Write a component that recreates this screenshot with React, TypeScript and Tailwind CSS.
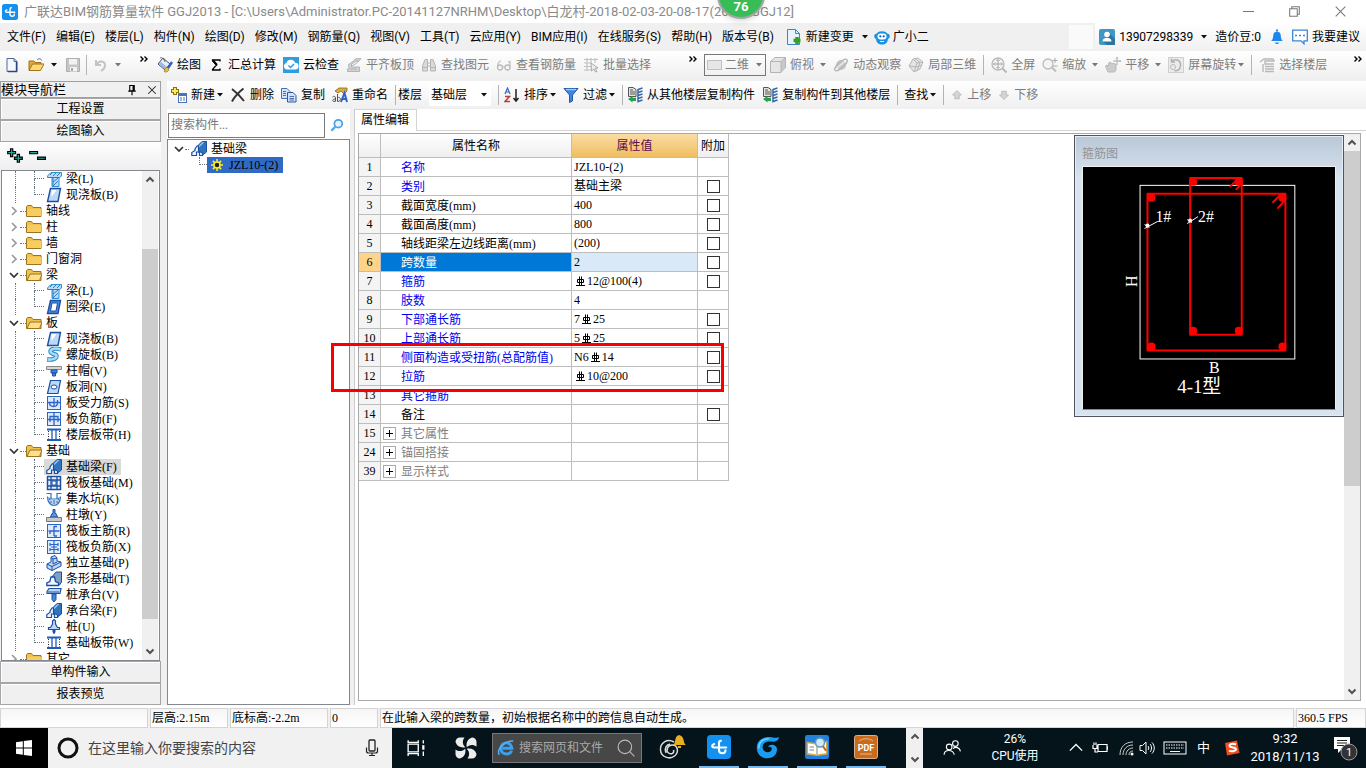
import React from 'react';

const UI = "font-[Roboto,'Noto_Sans_CJK_SC',sans-serif]";
const SONG = "font-['Liberation_Serif','Noto_Sans_CJK_SC',serif]";

function Icon({ children, size = 16, className = '' }: { children: React.ReactNode; size?: number; className?: string }) {
  return (
    <svg width={size} height={size} viewBox="0 0 16 16" fill="none" className={`shrink-0 ${className}`} aria-hidden="true">
      {children}
    </svg>
  );
}

const Caret = ({ color = '#111' }: { color?: string }) => (
  <svg width="6" height="4" viewBox="0 0 6 4" className="shrink-0" aria-hidden="true"><path d="M0 0h6L3 3.4z" fill={color} /></svg>
);

const Chevrons = () => (
  <svg width="8" height="6" viewBox="0 0 8 6" className="shrink-0" aria-hidden="true"><path d="M.5.5 3 3 .5 5.5M4.500.5 7 3 4.500 5.500" stroke="#000" strokeWidth="1.4" fill="none" /></svg>
);

const Arrow = ({ dir }: { dir: 'up' | 'down' }) => (
  <svg width="10" height="7" viewBox="0 0 10 7" className="shrink-0" aria-hidden="true">
    <path d={dir === 'up' ? 'M1.500 5.500 5 2l3.500 3.500' : 'M1.500 1.500 5 5l3.500-3.500'} stroke="#505050" strokeWidth="2" fill="none" />
  </svg>
);

const Sep = () => <span className="h-5 w-px shrink-0 bg-[#b4b4b4]" />;

/* ---------- logos and toolbar icons ---------- */

const AppLogo = ({ size = 16 }: { size?: number }) => (
  <Icon size={size}>
    <rect width="16" height="16" rx="2.500" fill="#1490f0" />
    <path d="M9.300 3.800C8.200 3.800 8 4.500 8 5.300v4.900c0 1.400.9 2 2.300 2s2-.8 2-2M4.800 6C3 6.500 3 8.300 4.800 8.300h8" stroke="#fff" strokeWidth="1.400" strokeLinecap="round" />
  </Icon>
);

const NewFile = () => <Icon><path d="M3 1.500h7l3 3v10H3z" fill="#f4f8ff" stroke="#52699a" /><path d="M10 1.500v3h3" stroke="#52699a" /><path d="M12.500 5v9.500H4" stroke="#2d4478" strokeWidth="1.400" /></Icon>;
const OpenFile = () => <Icon><path d="M1 13V4h5l1 1.500h6V8" fill="#e7a733" stroke="#a2731d" /><path d="M1 13.500 4.500 7H16l-3.500 6.500z" fill="#ffd873" stroke="#a2731d" /><path d="M9 3c2-2 4-1.500 4.500.5" stroke="#3c6eb8" /></Icon>;
const SaveIcon = () => <Icon><path d="M1.500 1.500h13v13h-13z" fill="#c6c6c6" stroke="#b0b0b0" /><path d="M4 2h8v5.500H4zM5 10h7v4.500H5z" fill="#f2f2f2" /><path d="M6 11h2v3H6z" fill="#aaa" /></Icon>;
const Undo = () => <Icon><path d="M3 3v5h5M3.500 7.500C6 3 12 3.500 12 8.500c0 2-1.500 4-4 5.500" stroke="#c4c4c4" strokeWidth="2" /></Icon>;
const Paint = () => <Icon><path d="m6 1 7 6-5 6-7-6z" fill="#e8eef8" stroke="#38507c" /><path d="M1.500 7 8 12.500 10 10 4 5z" fill="#9db7dd" /><path d="M3 1c2-1 4 1 5 4" stroke="#666" /><path d="M10 10c-2 2-3 2-2.500 5C10 15.500 12 14 12 12z" fill="#e5bf3a" stroke="#8c6a15" strokeWidth=".6" /><path d="m11 11 4-6" stroke="#2b63c4" strokeWidth="2.400" /></Icon>;
const Sigma = () => <Icon><path d="M12 4.500V3H4.500v.5L8.500 8l-4 4.500v.5H12v-1.500" stroke="#000" strokeWidth="1.300" /><path d="m5 3.500 4 4.500" stroke="#000" strokeWidth="2" /></Icon>;
const CloudCheck = () => <Icon><rect width="16" height="16" fill="#2d9de0" /><path d="M4 12.500a3.300 3.300 0 0 1-.5-6.500A4.500 4.500 0 0 1 12 5.700a3.400 3.400 0 0 1 .3 6.800z" fill="#fff" /><path d="m5.500 8.500 2 2L11 7" stroke="#2d9de0" strokeWidth="1.500" /></Icon>;
const AlignTop = () => <Icon><path d="M1.500 14.500h12V10h-8V7l6-3.500v2L15 1.500 9 2v1L2.500 7.500 3 12H1.500z" fill="#d2d2d2" stroke="#b4b4b4" /><path d="M4 12h7M6 9l5-3" stroke="#b4b4b4" /></Icon>;
const Binoculars = () => <Icon><path d="M1.500 14V9L4 2.500h2.500V14zM14.500 14V9L12 2.500H9.500V14z" fill="#dadada" stroke="#b4b4b4" /><path d="M6.500 6h3v3h-3zM1.500 10.500h5M9.500 10.500h5" stroke="#b4b4b4" /></Icon>;
const Glasses = () => <Icon><circle cx="4" cy="10.500" r="2.500" stroke="#bbb" strokeWidth="1.300" /><circle cx="11.500" cy="10.500" r="2.500" stroke="#bbb" strokeWidth="1.300" /><path d="M1.500 9C2 6 3.500 4 5 4M14 10V4.500l-2 .5M6.500 10h2.500" stroke="#bbb" strokeWidth="1.200" /></Icon>;
const Batch = () => <Icon><path d="M1 2.500h14M1 6h7M1 9.500h7M1 13h7M4 1v13M8 1v5M12 1v5" stroke="#c2c2c2" strokeWidth="1.200" /><path d="m8 6 7 5-3 .3 2 3.200-1.500.5-1.700-3L8.500 14z" fill="#eee" stroke="#aaa" /></Icon>;
const Flat2d = () => <Icon><rect x=".5" y="3.500" width="14" height="9" fill="#e6e6e6" stroke="#c0c0c0" /></Icon>;
const Cube = () => <Icon><path d="M.5 4.500 5 .5h10.500v10l-4.500 5H.5z" fill="#e6e6e6" stroke="#b4b4b4" /><path d="M11 5v10l4-4.500V1z" fill="#c8c8c8" /><path d="M.5 4.500H11V15M11 4.500l4.500-4" stroke="#b4b4b4" /></Icon>;
const Orbit = () => <Icon><circle cx="8" cy="8" r="5" fill="#c8c8c8" /><ellipse cx="8" cy="8" rx="8" ry="2.800" transform="rotate(-42 8 8)" stroke="#b4b4b4" strokeWidth="1.300" /><path d="m4 11 8-7" stroke="#e8e8e8" strokeWidth="1.300" /></Icon>;
const Part3d = () => <Icon><path d="m1 9 4-7 5-1 5 4-3 7-6 3z" fill="#e4e4e4" stroke="#b8b8b8" /><path d="m5 2 4 4-3 9M9 6l6-1M1 9l7 1 6-2M7 1.500l5 4L9 14" stroke="#b8b8b8" /></Icon>;
const FullView = () => <Icon><circle cx="7" cy="7" r="6" fill="#f4f4f4" stroke="#b8b8b8" strokeWidth="1.300" /><path d="M7 2.500v9M2.500 7h9M5.500 4 7 2.500 8.500 4M5.500 10 7 11.500 8.500 10M4 5.500 2.500 7 4 8.500M10 5.500 11.500 7 10 8.500" stroke="#a8a8a8" /><path d="m11.500 11.500 4 4" stroke="#b8b8b8" strokeWidth="2" /></Icon>;
const ZoomIc = () => <Icon><circle cx="6" cy="7" r="5" fill="#f4f4f4" stroke="#bcbcbc" strokeWidth="1.300" /><path d="m10 10.500 4 4" stroke="#bcbcbc" strokeWidth="2" /><path d="M13 1v5M10.500 3.500h5M10.500 9h5" stroke="#aaa" /></Icon>;
const Pan = () => <Icon><path d="M3 15 .5 9 2 8l1.500 1.500V6l2-1 1 2 2-1 1 1 1.500 0L11 13l-1.500 2z" fill="#ccc" stroke="#b8b8b8" /><path d="M12 0v8M8 4h8M11 1.500 12 .5l1 1M14.500 3l1 1-1 1" stroke="#aaa" /></Icon>;
const Rotate = () => <Icon><rect x=".5" y=".5" width="15" height="15" fill="#ebebeb" stroke="#cfcfcf" /><path d="M4 4C8 1 13 3.500 12.500 8.500S9 14 6.500 13.500M3.500 1.500V5H7" stroke="#b0b0b0" strokeWidth="1.500" /><circle cx="5" cy="10" r="2.500" stroke="#bbb" /></Icon>;
const Floors = () => <Icon><path d="m1 5 4-3h9l1 2H6v3h9M4 7v8M6 9.500h9M6 12h9M6 14.500h9" stroke="#b8b8b8" strokeWidth="1.400" /></Icon>;

const NewItem = () => <Icon><path d="M4 0v8M0 4h8" stroke="#8a7410" strokeWidth="4" /><path d="M4 1v6M1 4h6" stroke="#ffe65c" strokeWidth="2" /><rect x="7.500" y="6.500" width="8" height="9" fill="#fff" stroke="#4c72b8" /><path d="M8 8h7.500" stroke="#4c72b8" strokeWidth="2" /><path d="M9 11h2M12 11h2M9 13h2M12 13h2" stroke="#4c72b8" /></Icon>;
const DeleteX = () => <Icon><path d="M2 2c4 3 8 7 12 12M13.500 1.500C9 5 5 9 2 14.500" stroke="#333" strokeWidth="2" /></Icon>;
const Copy = () => <Icon><path d="M.5 1.500H6l3 3v7H.5z" fill="#d5e3f8" stroke="#4a6fb5" /><path d="M6.500 5.500H12l3 3v6.500H6.500z" fill="#d5e3f8" stroke="#2f559e" /><path d="M2 4.500h3M2 6.500h3M2 8.500h3M8.500 9.500H13M8.500 11.500H13M8.500 13H13" stroke="#4a6fb5" /></Icon>;
const Rename = () => <Icon><path d="M3 4 7 1h8v3l-3 3-3-3-3 2z" fill="#dcae38" stroke="#85671b" strokeWidth=".8" /><path d="M.5 10c1-1 3-1 3 1v3.500M3.500 12c-3-.5-3.500 2.500-1.500 2.500S3.500 13 3.500 12M5.500 7v7.500c4 0 4-5 0-4" stroke="#555" /><path d="m9 15 3.500-9 2.500 9M10 12h4" stroke="#2f65c7" strokeWidth="2" /></Icon>;
const SortAZ = () => <Icon><path d="M1 7 3.500 1 6 7M2 5h3" stroke="#3468b8" strokeWidth="1.200" /><path d="M1 9.500h4.500L1 14.500h5" stroke="#b3413b" strokeWidth="1.500" /><path d="M12 2v12M9.500 11l2.500 3 2.500-3" stroke="#222" strokeWidth="1.500" /></Icon>;
const Filter = () => <Icon><path d="M1 1.500h14L9.500 8v6l-3 1.500V8z" fill="#3f86e2" stroke="#2159a8" /><path d="M3 2.500h10" stroke="#a7cdfa" strokeWidth="1.300" /></Icon>;
const CopyFrom = () => <Icon><path d="M1.500.5H6l3 2v7H1.500z" fill="#e4e4e4" stroke="#555" /><path d="M3 3h3M3 5h5M3 7h5" stroke="#555" /><path d="M8 15.500V14H4.500v1.500L0 12l4.500-3v1.800H8z" fill="#27a04c" transform="translate(1 0)" /><path d="M11 2v13.500M11 2.500l4.500-1.500M11 5.500 15.500 4M11 8.500 15.500 7M11 11.500l4.500-1.500M11 14.500l4.500-1.500" stroke="#3566a8" strokeWidth="1.500" /></Icon>;
const MoveArrow = ({ down }: { down?: boolean }) => <Icon size={12} className={down ? 'rotate-180' : ''}><path d="m8 2 6 6h-3v5H5V8H2z" fill="#d5d5d5" stroke="#b0b0b0" /></Icon>;
const FileAdd = () => <Icon><path d="M1.500.5h8l4 4v11h-12z" fill="#e6f3fd" stroke="#3d86c0" /><path d="M9.500.5v4h4" stroke="#3d86c0" /><path d="M11 8v7M7.500 11.500h7" stroke="#31a321" strokeWidth="3.500" /></Icon>;
const Robot = () => <Icon><path d="M3 4.500C4 1.500 12 1.500 13 4.500c3 0 4 4 1 5.500-.5 4-2.500 5.500-6 5.500S2.500 14 2 10c-3-1.500-2-5.500 1-5.500z" fill="#1692e8" /><rect x="3.500" y="4.500" width="9" height="6" rx="3" fill="#fff" /><circle cx="6.300" cy="7.300" r="1.100" fill="#0e5ea6" /><circle cx="9.700" cy="7.300" r="1.100" fill="#0e5ea6" /><path d="M6 12.500h4" stroke="#fff" /></Icon>;
const UserBadge = () => <Icon><rect width="16" height="16" rx="2" fill="#3f97c6" /><path d="m11 5 5 5v6H8l-5-4z" fill="#2b75a0" /><circle cx="8" cy="5.500" r="2.800" fill="#fff" /><path d="M3.500 12.500c0-5 9-5 9 0z" fill="#fff" /></Icon>;
const Bell = () => <Icon><path d="M2 12c2-1 2-4 2.500-7 .6-3 6.400-3 7 0 .5 3 .5 6 2.500 7z" fill="#1d87ee" /><path d="M6 13.500a2 1.600 0 0 0 4 0zM7 .5h2v2H7z" fill="#1d87ee" /></Icon>;
const Bubble = () => <Icon><path d="M.7 1.200h14.600v10.600H12v3l-3-3H.7z" fill="#fff" stroke="#3a85d8" strokeWidth="1.300" /><path d="M3 6.500h2M7 6.500h2M11 6.500h2" stroke="#3a85d8" strokeWidth="1.500" /></Icon>;

/* ---------- component tree ---------- */

const Folder = ({ open }: { open?: boolean }) => (
  <Icon>
    <path d="M.5 13.500v-10l1-1h4l1.500 2h8v9z" fill="#f0c24f" stroke="#9c7320" />
    {open ? <path d="M1 13.500 4 7h12l-2.500 6.500z" fill="#ffe08a" stroke="#9c7320" /> : <path d="M1 6h14v7H1z" fill="#f6cd61" />}
  </Icon>
);

const B = '#1a4fa3';
const L = '#bcd8f6';

const glyphs: Record<string, React.ReactNode> = {
  beam: <><path d="M1.500 5 5 1.500h10.500V5L13 7v8.500H6V6.500H1.500z" fill={L} stroke="#3090d0" /><path d="M2 6.500 13 6.500M7 6.500v9M4 4l2-2M7 5l3-3M11 5l3-3M7 11l5-4M7 15l5-5" stroke="#2b7fc4" /></>,
  slab: <><path d="M4.500 1.500h10L12 14.500H1.500z" fill={L} stroke={B} strokeWidth="1.400" /><path d="M5.500 3h5l-5 7z" fill="#fff" /></>,
  ring: <><path d="M4.500 1.500h10L12 14.500H1.500z" fill="#5089d8" stroke={B} strokeWidth="1.400" /><path d="M6 4h5.500L10 12H4.500z" fill="#fff" stroke={B} /></>,
  spiral: <><path d="M15 2.500C8 0 3 3 5 5.500s5.500 1 5.500 3.500S7 13 1 12.500" stroke="#2789c9" strokeWidth="4.500" /><path d="M14.500 2.500C8 0 3 3 5 5.500s5.500 1 5.500 3.500S7 13 1.500 12.500" stroke="#a9dcf5" strokeWidth="2.600" /></>,
  cap: <><path d="M.5 3.500h15v3H.5z" fill="#d5d5d5" stroke="#888" /><path d="M5 7h6v3H5zM6.500 10h3v3h-3z" fill="#4a86d6" stroke={B} /></>,
  hole: <><path d="M4.500 1.500h10L12 14.500H1.500z" fill={L} stroke={B} strokeWidth="1.200" /><ellipse cx="8" cy="8" rx="3" ry="2" fill="#fff" stroke={B} /></>,
  forceBar: <><rect x="1.500" y="1.500" width="13" height="13" fill="#dfeafd" stroke="#2b64c9" /><path d="M2 7.500h12M8 3v9M3.500 7.500c0 3 1.500 4 4 4s4-1.500 4-4V5" stroke="#2b64c9" strokeWidth="1.300" /></>,
  negBar: <><rect x="1.500" y="1.500" width="13" height="13" fill="#dfeafd" stroke="#2b64c9" /><path d="M8 2v12M4 11V5.500h8V11M2 8.500h12" stroke="#2b64c9" strokeWidth="1.300" /></>,
  strip: <><path d="M1 2.500h14M1 13h14" stroke="#1f5bbd" strokeWidth="1.800" /><path d="M6 3v9M10 3v9" stroke="#1f5bbd" strokeWidth="1.300" /><path d="M2.500 4v8M13.500 4v8" stroke="#222" strokeDasharray="1 1.500" /></>,
  footBeam: <><path d="M6.500 10V5L11 .5h4.500V11L11 14.500z" fill="#2f74bd" stroke={B} /><path d="m7.500 6 5-5" stroke="#9cc6ee" strokeWidth="1.500" /><path d="M.8 14.500v-3L4 9.500V8l2-3h1.500v5l4 2v2.500H8.500V11h-3v3.500z" fill="#eef6ff" stroke={B} strokeWidth="1.200" /></>,
  raft: <><rect x="1.500" y="1.500" width="13" height="13" fill="#e8f1fd" stroke={B} strokeWidth="1.500" /><path d="M2 5h12M2 11h12M5 2v12M11 2v12" stroke={B} strokeWidth="1.300" /><rect x="6" y="6" width="4" height="4" fill="#fff" stroke={B} /></>,
  pit: <><path d="M2 6h3v3h6V6h3c0 11-12 11-12 0z" fill={L} /><path d="M.5 2.500H5V8h6V2.500h4.500M1.500 5.500c0 12 13 12 13 0" stroke="#2f74bd" strokeWidth="1.200" /><path d="M3.500 8h.1M5 11h.1M8 12h.1M11 11h.1M12.500 8h.1M8 10h.1" stroke={B} strokeLinecap="round" strokeWidth="1.400" /></>,
  pier: <><path d="M4.500 10 6 6.500h1V2.500h2v4h1l1.500 3.500z" fill="#5d97dd" stroke={B} /><path d="M.5 10.500h15v4H.5z" fill="#c9c9c9" stroke="#777" /></>,
  mainBar: <><rect x="1.500" y="1.500" width="13" height="13" fill="#dfeafd" stroke="#2b64c9" /><path d="M2.500 8h11M8 3v10M8 3.500h3M4 11V8M11 13H8" stroke="#2b64c9" strokeWidth="1.300" /></>,
  topBar: <><rect x="1.500" y="1.500" width="13" height="13" fill="#dfeafd" stroke="#2b64c9" /><path d="M8 2v12M4 5.500h8M4 10.500h8M4 4v3M12 4v3M4 9v3M12 9v3M5 8h6" stroke="#2b64c9" strokeWidth="1.200" /></>,
  pad: <><path d="m1 9 4-2V2l4-1.500L11 3v3l4 1v4l-9 4.500L1 13z" fill={L} stroke={B} /><path d="M5 2.500 7 4v5l4-2M1 9l5 2.500L15 7M6 11.500v4M7 4l4-1" stroke={B} /></>,
  stripFoot: <><path d="m5 7 5-6h5.500v10l-2 3z" fill="#7d9fc4" stroke={B} /><path d="M.8 14.500V12l3-1.500L5 6h3.500l1 4.500 3 1.500v2.500z" fill="#eef5fd" stroke={B} strokeWidth="1.300" /></>,
  pileCap: <><path d="M1 4.500 3 1.500h12l-1 5H1z" fill={L} stroke={B} strokeWidth="1.200" /><path d="M2 5h11M6 7v5.500l2 2.500 2-2.500V7z" fill="#4a86d6" stroke={B} /></>,
  pile: <><path d="M6.500 2 8 .5 9.500 2v3l2 3.500h2v2h-11v-2h2l2-3.500z" fill={L} stroke={B} strokeWidth="1.200" /><path d="M6.500 11h3v2L8 15.500 6.500 13z" fill={B} /></>,
};

type Node = { label: string; icon?: string; open?: boolean; last?: boolean; selected?: boolean };

const tree: Node[] = [
  { label: '梁(L)', icon: 'beam' },
  { label: '现浇板(B)', icon: 'slab', last: true },
  { label: '轴线' },
  { label: '柱' },
  { label: '墙' },
  { label: '门窗洞' },
  { label: '梁', open: true },
  { label: '梁(L)', icon: 'beam' },
  { label: '圈梁(E)', icon: 'ring', last: true },
  { label: '板', open: true },
  { label: '现浇板(B)', icon: 'slab' },
  { label: '螺旋板(B)', icon: 'spiral' },
  { label: '柱帽(V)', icon: 'cap' },
  { label: '板洞(N)', icon: 'hole' },
  { label: '板受力筋(S)', icon: 'forceBar' },
  { label: '板负筋(F)', icon: 'negBar' },
  { label: '楼层板带(H)', icon: 'strip', last: true },
  { label: '基础', open: true },
  { label: '基础梁(F)', icon: 'footBeam', selected: true },
  { label: '筏板基础(M)', icon: 'raft' },
  { label: '集水坑(K)', icon: 'pit' },
  { label: '柱墩(Y)', icon: 'pier' },
  { label: '筏板主筋(R)', icon: 'mainBar' },
  { label: '筏板负筋(X)', icon: 'topBar' },
  { label: '独立基础(P)', icon: 'pad' },
  { label: '条形基础(T)', icon: 'stripFoot' },
  { label: '桩承台(V)', icon: 'pileCap' },
  { label: '承台梁(F)', icon: 'footBeam' },
  { label: '桩(U)', icon: 'pile' },
  { label: '基础板带(W)', icon: 'strip', last: true },
  { label: '其它' },
];

function TreeRow({ node }: { node: Node }) {
  if (!node.icon) {
    return (
      <li className="flex h-4 items-center pl-[6px]">
        <svg width="12" height="12" viewBox="0 0 12 12" aria-hidden="true">
          <path d={node.open ? 'M2 4l4 4 4-4' : 'M4 2l4 4-4 4'} stroke={node.open ? '#333' : '#999'} strokeWidth="1.700" fill="none" />
        </svg>
        <span className="w-[6px] border-b border-dotted border-gray-500" />
        <Folder open={node.open} />
        <span className="pl-1">{node.label}</span>
      </li>
    );
  }
  return (
    <li className="flex h-4 items-center pl-[13px]">
      <span className="h-full w-[19px] shrink-0 border-l border-dotted border-gray-500" />
      <span className="flex h-full w-[10px] shrink-0 flex-col">
        <span className="h-2 border-b border-l border-dotted border-gray-500" />
        <span className={node.last ? 'h-2' : 'h-2 border-l border-dotted border-gray-500'} />
      </span>
      <span className={`flex h-4 items-center gap-1 px-[2px] ${node.selected ? 'bg-[#d9d9d9] pr-1' : ''}`}>
        <Icon>{glyphs[node.icon]}</Icon>
        <span>{node.label}</span>
      </span>
    </li>
  );
}

function LeftPanel() {
  const tab = 'h-[22px] shrink-0 border border-[#a5a5a5] bg-[#f0f0f0] text-center leading-5 shadow-[inset_1px_1px_0_#fff]';
  return (
    <aside className={`flex w-[161px] shrink-0 flex-col text-xs ${SONG}`}>
      <div className="flex h-[17px] items-center border border-[#a0a0a0]">
        <h2 className="flex-1 text-[13px] leading-4">模块导航栏</h2>
        <button aria-label="固定" className="mr-2"><Icon size={12}><path d="M5 2h6v7H5zM9.500 2v7M3 9.500h10M8 10v5" stroke="#000" strokeWidth="1.500" /></Icon></button>
        <button aria-label="关闭" className="mr-[2px]"><Icon size={12}><path d="m3 3 10 10M13 3 3 13" stroke="#222" strokeWidth="1.400" /></Icon></button>
      </div>
      <button className={tab}>工程设置</button>
      <button className={tab}>绘图输入</button>
      <div className="flex h-7 shrink-0 items-center gap-1 bg-linear-to-b from-white to-[#eee] px-[6px]">
        <button aria-label="全部展开"><Icon size={18}><path d="M5 1v8M1 5h8M11 6v8M7 10h8" stroke="#000" strokeWidth="3" /><path d="M5 2v6M2 5h6M11 7v6M8 10h6" stroke="#2aa79b" /></Icon></button>
        <button aria-label="全部折叠"><Icon size={18}><path d="M1 5h8M8 10h8" stroke="#000" strokeWidth="3" /><path d="M2 5h6M9 10h6" stroke="#2aa79b" /></Icon></button>
      </div>
      <div className="mx-px flex min-h-0 flex-1 border border-[#828790] bg-white">
        <ul className="min-w-0 flex-1 overflow-hidden whitespace-nowrap leading-4">
          {tree.map((n, i) => <TreeRow key={i} node={n} />)}
        </ul>
        <div className="mr-px flex w-4 shrink-0 flex-col items-center bg-[#f0f0f0]">
          <span className="flex h-[17px] items-center"><Arrow dir="up" /></span>
          <span className="h-[61px]" />
          <span className="w-full flex-1 bg-[#cdcdcd]" />
          <span className="h-6" />
          <span className="flex h-[17px] items-center"><Arrow dir="down" /></span>
        </div>
      </div>
      <button className={tab}>单构件输入</button>
      <button className={tab}>报表预览</button>
    </aside>
  );
}

/* ---------- property table ---------- */

type Prop = { no: number; name: string; value?: string; check?: boolean; tone?: 'black' | 'gray'; group?: boolean };

const props: Prop[] = [
  { no: 1, name: '名称', value: 'JZL10-(2)' },
  { no: 2, name: '类别', value: '基础主梁', check: true },
  { no: 3, name: '截面宽度(mm)', value: '400', check: true, tone: 'black' },
  { no: 4, name: '截面高度(mm)', value: '800', check: true, tone: 'black' },
  { no: 5, name: '轴线距梁左边线距离(mm)', value: '(200)', check: true, tone: 'black' },
  { no: 6, name: '跨数量', value: '2', check: true },
  { no: 7, name: '箍筋', value: '@12@100(4)', check: true },
  { no: 8, name: '肢数', value: '4' },
  { no: 9, name: '下部通长筋', value: '7@25', check: true },
  { no: 10, name: '上部通长筋', value: '5@25', check: true },
  { no: 11, name: '侧面构造或受扭筋(总配筋值)', value: 'N6@14', check: true },
  { no: 12, name: '拉筋', value: '@10@200', check: true },
  { no: 13, name: '其它箍筋' },
  { no: 14, name: '备注', check: true, tone: 'black' },
  { no: 15, name: '其它属性', tone: 'gray', group: true },
  { no: 24, name: '锚固搭接', tone: 'gray', group: true },
  { no: 39, name: '显示样式', tone: 'gray', group: true },
];

// Grade III rebar mark, placed where the first @ stands in the value
const Rebar = () => (
  <svg width="11" height="11" viewBox="0 0 11 11" className="mx-px inline-block align-[-2px]" aria-hidden="true">
    <path d="M2.500 3.500h6v3h-6zM4.500.5v9M6.500.5v9M1 9.500h9" stroke="#000" fill="none" />
  </svg>
);

function Value({ text = '' }: { text?: string }) {
  const at = text.indexOf('@');
  if (at < 0) return <>{text}</>;
  return <>{text.slice(0, at)}<Rebar />{text.slice(at + 1)}</>;
}

function PropertyTable() {
  const cell = 'border-b border-r border-[#bdbdbd] p-0';
  return (
    <table className="w-[370px] table-fixed self-start border-separate border-spacing-0 text-xs leading-4">
      <colgroup><col className="w-[22px]" /><col className="w-[191px]" /><col className="w-[126px]" /><col className="w-[31px]" /></colgroup>
      <thead>
        <tr className="h-6 bg-linear-to-b from-white to-[#eee]">
          <th className={cell} aria-label="序号" />
          <th className={`${cell} font-normal`}>属性名称</th>
          <th className={`${cell} bg-linear-to-b from-[#fbdca4] to-[#efbe5e] font-normal text-[#5c0a50]`}>属性值</th>
          <th className={`${cell} font-normal`}>附加</th>
        </tr>
      </thead>
      <tbody>
        {props.map((p) => {
          const active = p.no === 6;
          const tone = active ? 'bg-[#0078d7] text-white' : p.tone === 'black' ? 'text-black' : p.tone === 'gray' ? 'text-[#808080]' : 'text-[#0000f0]';
          return (
            <tr key={p.no} className="h-[19px]">
              <td className={`${cell} text-center ${active ? 'bg-[#ffd48a]' : 'bg-[#f4f4f4]'}`}>{p.no}</td>
              <td className={`${cell} ${tone}`}>
                <div className="flex h-[18px] items-center pt-px">
                  <span className="w-5 shrink-0 pl-[2px]">
                    {p.group && (
                      <button aria-label={`展开${p.name}`} className="block size-[13px] border border-[#aaa] bg-white">
                        <svg width="11" height="11" viewBox="0 0 11 11" aria-hidden="true"><path d="M2 5.500h7M5.500 2v7" stroke="#000" /></svg>
                      </button>
                    )}
                  </span>
                  <span className="whitespace-nowrap">{p.name}</span>
                </div>
              </td>
              <td className={`${cell} ${active ? 'bg-[#d9e9f7]' : ''}`}><div className="h-4 whitespace-nowrap pl-[2px]"><Value text={p.value} /></div></td>
              <td className={cell}>
                {p.check && <input type="checkbox" aria-label={`附加${p.name}`} className="mx-auto block size-[13px] appearance-none border border-[#333] bg-white" />}
              </td>
            </tr>
          );
        })}
      </tbody>
    </table>
  );
}

function StirrupWindow() {
  return (
    <section className="absolute right-4 top-px w-[270px] border border-[#50545c] bg-linear-to-b from-[#b9c7d6] to-[#d8e3f0] to-15% px-[7px] pb-[6px] shadow-[inset_0_0_0_1px_#e4ecf5]">
      <h3 className={`pb-1 pt-[10px] text-xs leading-4 text-[#909498] ${UI}`}>箍筋图</h3>
      <svg width="100%" viewBox="0 0 254 244" fill="none" className="block border border-[#eee] border-b-[#888] bg-black" role="img" aria-label="箍筋图">
        <rect x="57.500" y="18.500" width="156" height="175" stroke="#fff" />
        <g stroke="#f00" strokeWidth="2" strokeLinejoin="round">
          <rect x="65" y="27" width="139" height="158" />
          <rect x="108" y="11" width="52" height="158" />
          <path d="m200 27-9 9M204 33l-8 9M156 12l-8 8M160 17l-6 6" />
        </g>
        <g fill="#f00">
          <circle cx="69" cy="31" r="4" /><circle cx="201" cy="31" r="4" /><circle cx="69" cy="181" r="4" /><circle cx="201" cy="181" r="4" />
          <circle cx="111" cy="15" r="4" /><circle cx="157" cy="15" r="4" /><circle cx="111" cy="165" r="4" /><circle cx="157" cy="165" r="4" />
        </g>
        <path d="m62 62 13-7M62 58l5 3M105 57l11-7M105 53l5 3" stroke="#fff" />
        <circle cx="65" cy="59" r="2" fill="#fff" /><circle cx="108" cy="54" r="2" fill="#fff" />
        <g fill="#fff" fontSize="16" fontFamily="'Liberation Serif','Noto Sans CJK SC',serif">
          <text x="73" y="55">1#</text>
          <text x="116" y="55">2#</text>
          <text x="54" y="121" transform="rotate(-90 54 121)">H</text>
          <text x="127" y="208">B</text>
          <text x="95" y="228" fontSize="19">4-1型</text>
        </g>
      </svg>
    </section>
  );
}

/* ---------- top bars ---------- */

const menus = ['文件(F)', '编辑(E)', '楼层(L)', '构件(N)', '绘图(D)', '修改(M)', '钢筋量(Q)', '视图(V)', '工具(T)', '云应用(Y)', 'BIM应用(I)', '在线服务(S)', '帮助(H)', '版本号(B)'];

function Tool({ icon, label, off, menu, wide }: { icon?: React.ReactNode; label: string; off?: boolean; menu?: boolean; wide?: boolean }) {
  return (
    <button className={`flex shrink-0 items-center gap-1 ${off ? 'text-[#7d7d7d]' : ''}`} disabled={off}>
      {icon}
      <span className={`flex items-center ${wide ? 'gap-[6px]' : 'gap-[2px]'}`}>
        {label}
        {menu && <Caret color={off ? '#777' : '#111'} />}
      </span>
    </button>
  );
}

function TopBars() {
  return (
    <header className="shrink-0">
      <div className="flex h-[23px] items-center gap-[6px] bg-white pl-[2px] text-[#8a8a8a]">
        <AppLogo />
        <h1 className="flex-1 whitespace-nowrap text-[13px]">广联达BIM钢筋算量软件 GGJ2013 - [C:\Users\Administrator.PC-20141127NRHM\Desktop\白龙村-2018-02-03-20-08-17(2666).GGJ12]</h1>
        <div className="flex gap-[35px] pr-[20px]">
          <button aria-label="最小化"><Icon size={11}><path d="M0 8h16" stroke="#777" strokeWidth="1.500" /></Icon></button>
          <button aria-label="还原"><Icon size={11}><path d="M1 4h11v11H1zM4 4V1h11v11h-3" stroke="#777" strokeWidth="1.500" /></Icon></button>
          <button aria-label="关闭"><Icon size={11}><path d="m1 1 14 14M15 1 1 15" stroke="#777" strokeWidth="1.500" /></Icon></button>
        </div>
      </div>
      <nav className="flex h-7 items-center whitespace-nowrap pl-[7px]">
        <div className="flex gap-[10px]">
          {menus.map((m) => <button key={m}>{m}</button>)}
        </div>
        <button className="ml-3 flex items-center gap-1"><FileAdd />新建变更<span className="pl-1"><Caret /></span></button>
        <button className="ml-[6px] flex items-center gap-[3px]"><Robot />广小二</button>
        <span className="ml-auto mr-[2px] h-6 w-6 bg-[#fafafa]" />
        <div className="flex h-full items-center bg-linear-to-b from-white to-[#f0f0f0] pl-1 pr-[6px]">
          <button className="flex items-center gap-1"><UserBadge />13907298339<span className="px-1"><Caret /></span></button>
          <span className="pl-1">造价豆:0</span>
          <button aria-label="消息" className="ml-2"><Bell /></button>
          <button className="ml-[7px] flex items-center gap-1"><Bubble />我要建议</button>
        </div>
      </nav>
      <div className="flex h-7 items-center whitespace-nowrap bg-linear-to-b from-white to-[#efefef] pl-1">
        <button aria-label="新建"><NewFile /></button>
        <button aria-label="打开" className="ml-2 flex items-center gap-[7px]"><OpenFile /><Caret /></button>
        <button aria-label="保存" className="ml-2 mr-[5px]" disabled><SaveIcon /></button>
        <Sep />
        <button aria-label="撤销" className="ml-[6px] mr-[19px] flex items-center gap-[6px]" disabled><Undo /><Caret color="#777" /></button>
        <span className="mb-3 mr-[9px]"><Chevrons /></span>
        <div className="flex items-center gap-[7px]">
          <Tool icon={<Paint />} label="绘图" />
          <Tool icon={<Sigma />} label="汇总计算" />
          <Tool icon={<CloudCheck />} label="云检查" />
          <Tool icon={<AlignTop />} label="平齐板顶" off />
          <Tool icon={<Binoculars />} label="查找图元" off />
          <Tool icon={<Glasses />} label="查看钢筋量" off />
          <Tool icon={<Batch />} label="批量选择" off />
        </div>
        <span className="mb-3 ml-[38px] mr-[7px]"><Chevrons /></span>
        <label className="relative mr-1 flex h-[22px] w-[62px] items-center border border-[#777] pl-[2px] text-[#7d7d7d]">
          <Flat2d />
          <select aria-label="视图维度" className="w-10 appearance-none pl-[2px]" disabled><option>二维</option></select>
          <span className="absolute right-[3px]"><Caret color="#777" /></span>
        </label>
        <div className="flex items-center gap-[7px]">
          <Tool icon={<Cube />} label="俯视" off menu wide />
          <Tool icon={<Orbit />} label="动态观察" off />
          <Tool icon={<Part3d />} label="局部三维" off />
          <Sep />
          <Tool icon={<FullView />} label="全屏" off />
          <Tool icon={<ZoomIc />} label="缩放" off menu wide />
          <Tool icon={<Pan />} label="平移" off menu wide />
          <Tool icon={<Rotate />} label="屏幕旋转" off menu />
          <Sep />
          <Tool icon={<Floors />} label="选择楼层" off />
        </div>
        <span className="mb-3 ml-auto mr-1"><Chevrons /></span>
      </div>
    </header>
  );
}

function EditBar() {
  return (
    <div className="flex h-7 shrink-0 items-center gap-[7px] whitespace-nowrap bg-linear-to-b from-white to-[#efefef] pl-1">
      <Tool icon={<NewItem />} label="新建" menu />
      <Tool icon={<DeleteX />} label="删除" />
      <Tool icon={<Copy />} label="复制" />
      <Tool icon={<Rename />} label="重命名" />
      <div className="flex items-center gap-[2px]">
        <Sep />
        <label htmlFor="floor">楼层</label>
        <span className="relative ml-[5px] flex items-center">
          <select id="floor" className="h-[22px] w-[62px] appearance-none bg-white pl-[2px]"><option>基础层</option></select>
          <span className="pointer-events-none absolute right-1"><Caret /></span>
        </span>
      </div>
      <div className="flex items-center gap-[5px]"><Sep /><Tool icon={<SortAZ />} label="排序" menu /></div>
      <Tool icon={<Filter />} label="过滤" menu />
      <div className="flex items-center gap-1"><Sep /><Tool icon={<CopyFrom />} label="从其他楼层复制构件" /></div>
      <Tool icon={<CopyFrom />} label="复制构件到其他楼层" />
      <div className="flex items-center gap-[6px]"><Sep /><Tool label="查找" menu /></div>
      <div className="flex items-center gap-[7px]"><Sep /><Tool icon={<MoveArrow />} label="上移" off /></div>
      <Tool icon={<MoveArrow down />} label="下移" off />
    </div>
  );
}

/* ---------- bottom bars ---------- */

function StatusBar() {
  const cell = 'border border-[#d4d4d4] bg-linear-to-b from-[#f6f6f6] to-white pl-px leading-[18px] whitespace-nowrap';
  return (
    <footer className={`flex h-5 shrink-0 gap-[2px] text-xs ${SONG}`}>
      <span className={`${cell} w-[148px]`} />
      <span className={`${cell} w-[78px]`}>层高:2.15m</span>
      <span className={`${cell} w-[98px]`}>底标高:-2.2m</span>
      <span className={`${cell} w-12`}>0</span>
      <span className={`${cell} flex-1`}>在此输入梁的跨数量，初始根据名称中的跨信息自动生成。</span>
      <span className={`${cell} w-[70px]`}>360.5 FPS</span>
    </footer>
  );
}

const stroke = { stroke: '#fff', fill: 'none' };

function Taskbar() {
  const app = 'flex h-10 w-10 items-center justify-center border-b-2 border-[#76b9ed]';
  return (
    <div className="flex h-10 shrink-0 items-center bg-[#04141a] text-white">
      <button aria-label="开始" className="flex h-10 w-12 items-center justify-center bg-black">
        <Icon><path d="m0 2.300 6.800-1v6.200H0zM7.800 1.100 16 0v7.500H7.800zM0 8.500h6.800v6.200L0 13.700zM7.800 8.500H16V16l-8.200-1.100z" fill="#fff" /></Icon>
      </button>
      <div className="flex h-10 w-[344px] items-center bg-[#f1f1f1] pl-2 pr-3 text-black">
        <svg width="24" height="24" viewBox="0 0 24 24" aria-hidden="true"><circle cx="12" cy="12" r="9" stroke="#111" strokeWidth="3" fill="none" /></svg>
        <input aria-label="搜索" placeholder="在这里输入你要搜索的内容" className="ml-2 min-w-0 flex-1 text-sm leading-5 outline-none placeholder:text-[#444]" />
        <svg width="16" height="18" viewBox="0 0 16 18" aria-hidden="true"><rect x="5" y="1" width="6" height="11" rx="1" stroke="#222" fill="none" strokeWidth="1.300" /><path d="M2.500 8.500V12q0 2 2 2h7q2 0 2-2V8.500M8 14v3M5 16.500h6" stroke="#222" fill="none" strokeWidth="1.200" /></svg>
      </div>
      <button aria-label="任务视图" className="flex w-12 justify-center">
        <Icon size={18}><path d="M1 4.500h9v7H1zM1 1v2h9V1M1 15v-2h9v2M14.500 1v3M14.500 11v4" {...stroke} strokeWidth="1.200" /><path d="M13.500 5.500h2v4h-2z" fill="#fff" /></Icon>
      </button>
      <button aria-label="浏览器" className="flex w-[52px] justify-center">
        <Icon size={24}>
          <path d="M1 4a3 3 0 0 1 3-3h3c-1.500 2-1.500 4.500.5 6.500C4.500 8 2 7 1 4zM12 1a3 3 0 0 1 3 3v3c-2-1.500-4.500-1.500-6.500.5C8 4.500 9 2 12 1zM15 12a3 3 0 0 1-3 3H9c1.500-2 1.500-4.500-.5-6.500C11.500 8 14 9 15 12zM4 15a3 3 0 0 1-3-3V9c2 1.500 4.500 1.500 6.500-.5C8 11.500 7 14 4 15z" fill="#ececec" />
        </Icon>
      </button>
      <div className="flex h-[30px] w-[150px] items-center border border-[#777] bg-[#474747] pl-1 pr-[6px]">
        <Icon size={18}><path d="M13 10.500c-1.500 4-9.500 4-9.500-2s8-7.500 9.800-.3H5" stroke="#3aa0f2" strokeWidth="2.500" /><path d="M2 14C-1 9 8 1 14.500 1.800" stroke="#55b4f5" strokeWidth="1.300" /></Icon>
        <input aria-label="搜索网页和文件" placeholder="搜索网页和文件" className="ml-1 min-w-0 flex-1 text-xs outline-none placeholder:text-[#aaa]" />
        <Icon size={18}><circle cx="7" cy="7" r="6" stroke="#bbb" /><path d="m11.500 11.500 4 4" stroke="#bbb" /></Icon>
      </div>
      <button aria-label="助手" className="ml-3 flex w-9 justify-center">
        <svg width="30" height="28" viewBox="0 0 30 28" aria-hidden="true">
          <path d="M17 8C10 4 3 9 3.500 16s9 10 14 6 3-11-2-11-7 6-4 8 6 0 5-3M13 10C9 11 7 15 9 19" stroke="#ddd" strokeWidth="1.500" fill="none" />
          <path d="M16 11c3-1 1-9 6-10 6 1 4 9 7 10zM21 12h3v2h-3z" fill="#e8b020" />
        </svg>
      </button>
      <div className="ml-[9px] flex gap-[9px]">
        <button aria-label="广联达" className={app}><AppLogo size={24} /></button>
        <button aria-label="G浏览器" className={app}>
          <Icon size={24}>
            <path d="M15.500 1.500c-1 3-3.500 3.200-5.500 2.900C6 4 4 6 4.500 9c.5 3 5.500 3.500 6 .5.2-1.200-.8-2-2.500-1.500 1-2.500 6-2 6 1.500 0 4-3 6-6.500 6C3 15.500.5 12 .5 8.500.5 4 4 1.500 8 1.300c3-.1 5 1 7.500.2z" fill="#1c9cf0" />
            <path d="M2 9C1.500 5 4.500 2.500 8.500 2.500" stroke="#6fd0ff" />
          </Icon>
        </button>
        <button aria-label="看图" className={app}><Icon size={24}><rect width="16" height="16" rx="1.500" fill="#2082dc" /><path d="M1.500 5 8 6l6.500-1.500v8L8 13.500l-6.500-1z" fill="#fff" stroke="#dba84b" /><path d="M8 6v7M3 8h3M3 10h3" stroke="#888" strokeWidth=".7" /><circle cx="10" cy="5" r="3" fill="#cdeaff" stroke="#6b95bb" /><path d="m12 7.500 2 3" stroke="#b66a22" strokeWidth="1.400" /></Icon></button>
        <button aria-label="PDF" className={app}>
          <svg width="24" height="24" viewBox="0 0 24 24" aria-hidden="true"><rect x=".5" y=".5" width="23" height="23" rx="2" fill="#c96a1c" stroke="#d8b08c" /><path d="M5 6c4-3 10-3 14 0M6 19h12" stroke="#eab787" fill="none" /><text x="12" y="16" fontSize="9" fontWeight="bold" fill="#fff" textAnchor="middle" fontFamily="Roboto">PDF</text></svg>
        </button>
      </div>
      <div className="ml-5 flex h-10 w-[17px] flex-col items-center justify-between bg-[#f0f0f0] py-[5px]"><Arrow dir="up" /><Arrow dir="down" /></div>
      <div className="ml-auto flex items-center pr-[6px]">
        <button aria-label="人脉"><Icon size={18}><circle cx="5.500" cy="7" r="2.500" {...stroke} /><circle cx="11" cy="4" r="2.500" {...stroke} /><path d="M1 14c0-5 8-5 9 0M9 8.500c2-2 6-1 6.500 2.500" {...stroke} /></Icon></button>
        <div className="mx-5 w-[68px] text-center text-xs leading-[17px]"><div>26%</div><div>CPU使用</div></div>
        <button aria-label="显示隐藏的图标"><Icon size={14}><path d="m1 11 7-7 7 7" {...stroke} strokeWidth="1.500" /></Icon></button>
        <span className="ml-[9px]"><Icon><path d="M6 4.500h9v7H6zM15.500 6.500v3M1 5v3.500h4V5M2 2.500V5M4 2.500V5M3 9v3h3" {...stroke} strokeWidth="1.200" /></Icon></span>
        <span className="ml-[10px]"><Icon><path d="M2 15C2 7 7 2 15 2M5 15c0-6 4-10 10-10M8 15c0-4 3-7 7-7M11 15c0-2.500 1.500-4 4-4" stroke="#ccc" fill="none" /><circle cx="14" cy="14" r="1.500" fill="#fff" /></Icon></span>
        <span className="ml-[5px]"><Icon><path d="M1 5.500h2.500L7 2v12l-3.500-3.500H1zM9 6c1 1 1 3 0 4M11 4c2 2 2 6 0 8M13 2.500c3 3 3 8 0 11" {...stroke} /></Icon></span>
        <span className="ml-2"><svg width="24" height="14" viewBox="0 0 24 14" aria-hidden="true"><rect x="1" y="1" width="22" height="12" {...stroke} /><path d="M3 4h18M3 7h18" stroke="#fff" strokeDasharray="1.500 1" /><path d="M7 10.500h10" stroke="#fff" /></svg></span>
        <span className="ml-[10px] text-[13px]">中</span>
        <span className="ml-[14px]"><Icon><path d="M1 3 13 .5 15.500 13 3 15.500z" fill="#f04e1e" /><path d="M12 4.500c-3-1.500-7-.5-6.500 1.500s6 1 6.500 3-4.500 3-7 1.500" stroke="#fff" strokeWidth="2" /></Icon></span>
        <div className="ml-[10px] w-[70px] text-center text-[13px] leading-[18px]"><div>9:32</div><div>2018/11/13</div></div>
        <button aria-label="通知" className="ml-3">
          <svg width="28" height="26" viewBox="0 0 28 26" aria-hidden="true"><path d="M2 2h16v12h-8l-4 4v-4H2z" fill="#fff" /><path d="M5 5.500h10M5 8h10M5 10.500h7" stroke="#222" /><circle cx="17" cy="17" r="8" fill="#333" stroke="#999" /><text x="17" y="21" fontSize="11" fill="#fff" textAnchor="middle" fontFamily="Roboto">1</text></svg>
        </button>
      </div>
    </div>
  );
}

export default function App() {
  return (
    <div className={`relative flex h-screen flex-col overflow-hidden bg-[#f0f0f0] text-xs leading-4 text-black ${UI}`}>
      <TopBars />
      <div className="flex min-h-0 flex-1 gap-[6px] pt-[2px]">
        <LeftPanel />
        <div className="flex min-w-0 flex-1 flex-col">
          <EditBar />
          <div className="flex min-h-0 flex-1">
            <section className={`flex w-[183px] shrink-0 flex-col bg-white pt-1 ${SONG}`}>
              <div className="flex h-[26px] items-start gap-1 pl-px">
                <input aria-label="搜索构件" placeholder="搜索构件..." className="h-[25px] w-[157px] border border-[#7a7a7a] px-[2px] text-xs outline-none placeholder:text-[#777]" />
                <button aria-label="搜索" className="mt-1 flex h-4 w-4 items-center justify-center"><Icon size={14}><circle cx="9.500" cy="6.500" r="4.500" fill="#e6f4ff" stroke="#4aa3e8" strokeWidth="2" /><path d="m6 10-4.500 4.500" stroke="#4aa3e8" strokeWidth="2.500" /></Icon></button>
              </div>
              <ul className="min-h-0 flex-1 border border-[#828790] pl-[5px] pt-px">
                <li className="flex h-4 items-center">
                  <svg width="12" height="12" viewBox="0 0 12 12" aria-hidden="true"><path d="M2 4l4 4 4-4" stroke="#333" strokeWidth="1.700" fill="none" /></svg>
                  <span className="mr-[2px] w-1 border-b border-dotted border-gray-500" />
                  <Icon>{glyphs.footBeam}</Icon>
                  <span className="pl-1">基础梁</span>
                </li>
                <li className="flex h-4 pl-[26px]">
                  <span className="h-2 w-2 border-b border-l border-dotted border-gray-500" />
                  <span className="flex h-4 items-center gap-[6px] bg-[#316ac5] px-1 pr-[5px] text-black">
                    <Icon size={12}><path d="M8 0v16M0 8h16M2.500 2.500l11 11M13.500 2.500l-11 11" stroke="#ffee2a" strokeWidth="2" /><circle cx="8" cy="8" r="4" fill="#222" stroke="#ffee2a" strokeWidth="2" /></Icon>
                    JZL10-(2)
                  </span>
                </li>
              </ul>
            </section>
            <section className={`ml-1 flex min-w-0 flex-1 flex-col border-l border-[#ccc] bg-white ${SONG}`}>
              <div className="flex h-[22px] shrink-0 items-end border-[#d4d4d4]">
                <h2 className="h-[22px] w-[62px] border-r border-t border-[#d4d4d4] pl-[6px] leading-5">属性编辑</h2>
                <span className="flex-1 border-b border-[#d4d4d4]" />
              </div>
              <div className="relative mb-1 ml-[3px] mr-[5px] mt-[2px] flex min-h-0 flex-1 justify-between border border-[#a8a8a8]">
                <PropertyTable />
                <StirrupWindow />
                <div className="flex w-4 flex-col items-center bg-[#f0f0f0]">
                  <span className="flex h-[17px] items-center"><Arrow dir="up" /></span>
                  <span className="w-full flex-[61] bg-[#cdcdcd]" />
                  <span className="flex-[36]" />
                  <span className="flex h-[17px] items-center"><Arrow dir="down" /></span>
                </div>
                <div className="pointer-events-none absolute -left-7 top-[209px] h-[49px] w-[393px] border-[3px] border-[#f80000]" />
              </div>
            </section>
          </div>
        </div>
      </div>
      <div className="h-[3px] shrink-0 bg-white" />
      <StatusBar />
      <Taskbar />
      <div className="absolute left-[717px] top-[-29px] flex h-12 w-12 items-end justify-center rounded-full border-2 border-[#a5a5a5] bg-[#36bd57] pb-[2px] text-[13px] font-bold text-white shadow-md">76</div>
    </div>
  );
}
